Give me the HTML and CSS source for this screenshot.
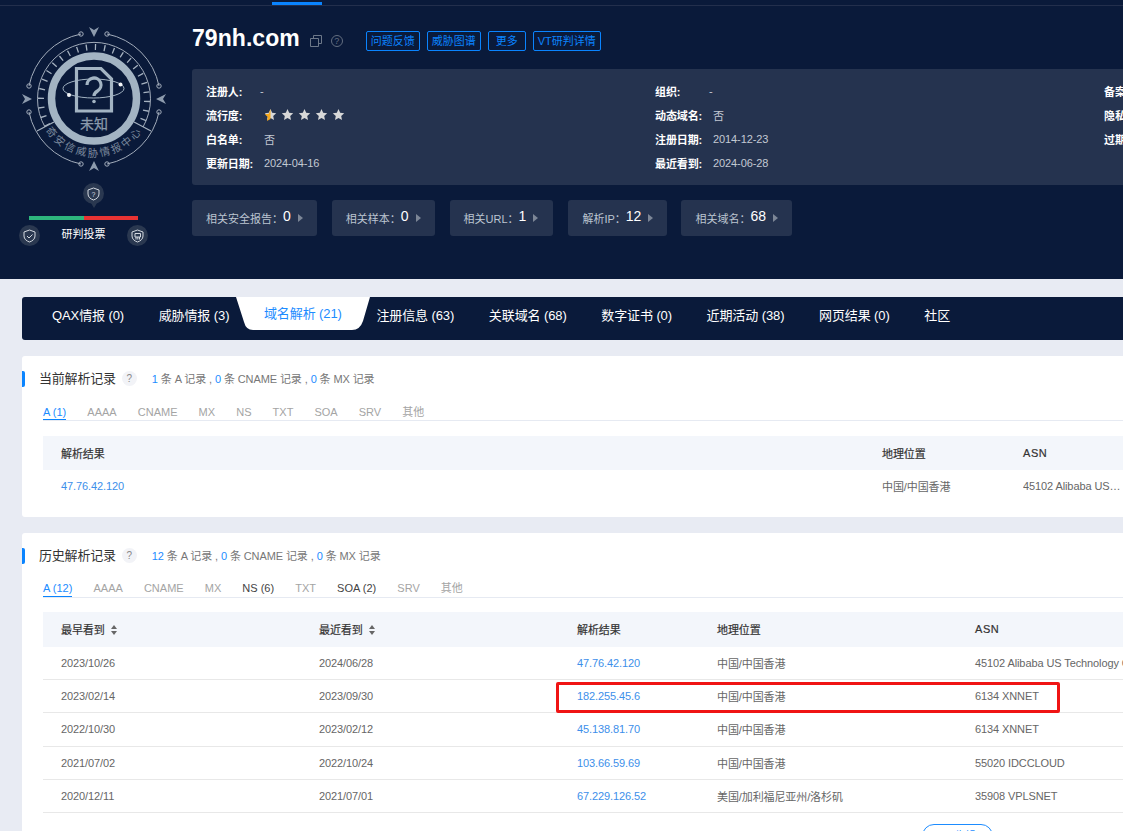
FILE: index.html
```html
<!DOCTYPE html>
<html lang="zh">
<head>
<meta charset="utf-8">
<title>79nh.com</title>
<link rel="stylesheet" href="styles.css">
</head>
<body>
<div class="page">
  <header class="hero">
    <div class="topnav"><span class="topnav-active"></span></div>
    <div class="hero-body">
      <aside class="verdict">
        <svg class="seal" width="192" height="180" viewBox="0 0 192 180">
          <g fill="none" stroke="#a2acba" stroke-width="1">
            <path d="M29 86A66 66 0 0 1 81 34"/><path d="M107 34A66 66 0 0 1 159 86"/>
            <path d="M29 112A66 66 0 0 0 81 164"/><path d="M107 164A66 66 0 0 0 159 112"/>
            <circle cx="29" cy="86" r="2.2"/><circle cx="159" cy="86" r="2.2"/>
            <circle cx="29" cy="112" r="2.2"/><circle cx="159" cy="112" r="2.2"/>
            <circle cx="81" cy="34" r="2.2"/><circle cx="107" cy="34" r="2.2"/>
            <circle cx="81" cy="164" r="2.2"/><circle cx="107" cy="164" r="2.2"/>
            <path d="M45 127A56.500 56.500 0 1 1 143 127"/>
            <path d="M47.500 125.500A53 53 0 1 1 140.500 125.500" stroke-width="6" stroke-dasharray="1.3 7.900" stroke="#a6b2c0"/>
            <path d="M37 131L54 122M151 131L134 122" stroke="#a6b2c0" stroke-width="1.200"/>
            <circle cx="94" cy="98.500" r="42.500" stroke="#a3b4c3" stroke-width="7.500"/>
          </g>
          <g fill="#8d9bad">
            <path d="M89 27l5 3 5-3-5 10z"/><path d="M89 171l5-3 5 3-5-10z"/>
            <path d="M22 94l3 5-3 5 10-5z"/><path d="M166 94l-3 5 3 5-10-5z"/>
          </g>
          <path d="M76.500 68.500h24.500l10.500 10.500v32H76.500z" fill="none" stroke="#a3b4c3" stroke-width="3.200"/>
          <path d="M87 85a7 7 0 1 1 10.500 6c-2.500 1.500-3.500 2.500-3.500 5" fill="none" stroke="#a3b4c3" stroke-width="3.200"/>
          <circle cx="94" cy="101.500" r="1.800" fill="#a3b4c3"/>
          <ellipse cx="93.500" cy="88.500" rx="30.500" ry="9.500" fill="none" stroke="#a3b4c3" stroke-width="1"/>
          <circle cx="69" cy="95" r="2" fill="#f4f6f8"/><circle cx="120.500" cy="84.500" r="2" fill="#f4f6f8"/>
          <text class="seal-state" x="94" y="129" text-anchor="middle">未知</text>
          <path id="sealArc" d="M44 128A58 58 0 0 0 144 128" fill="none"/>
          <text class="seal-org"><textPath href="#sealArc" startOffset="50%" text-anchor="middle">奇安信威胁情报中心</textPath></text>
        </svg>
        <div class="pin">
          <span class="round-icon"><svg width="13" height="14" viewBox="0 0 13 14"><path d="M6.500 1L12 3v4c0 3-2.500 5-5.500 6C3.500 12 1 10 1 7V3z" fill="none" stroke="#d4d9e0"/><text class="pin-q" x="6.500" y="9.500" text-anchor="middle">?</text></svg></span>
        </div>
        <div class="vote-bar"><span class="vote-good"></span><span class="vote-bad"></span></div>
        <div class="vote-row">
          <span class="round-icon"><svg width="13" height="14" viewBox="0 0 13 14"><path d="M6.500 1L12 3v4c0 3-2.500 5-5.500 6C3.500 12 1 10 1 7V3z" fill="none" stroke="#d4d9e0"/><path d="M4 7l2 2 3.500-3.500" fill="none" stroke="#d4d9e0"/></svg></span>
          <span class="vote-label">研判投票</span>
          <span class="round-icon"><svg width="13" height="14" viewBox="0 0 13 14"><path d="M6.500 1L12 3v4c0 3-2.500 5-5.500 6C3.500 12 1 10 1 7V3z" fill="none" stroke="#d4d9e0"/><path d="M4 4.500h5.500v3.500h-5.500zM5 8v2.500M6.800 8v2.500M8.500 8v2.500" fill="none" stroke="#d4d9e0"/></svg></span>
        </div>
      </aside>
      <div class="summary">
        <div class="title-row">
          <h1 class="domain">79nh.com</h1>
          <svg class="copy" width="12" height="12" viewBox="0 0 12 12"><path d="M.5 3.500h8v8h-8zM3.500 3.500v-3h8v8h-3" fill="none" stroke="#6d7889"/></svg>
          <span class="help-dark">?</span>
          <div class="actions">
            <a class="action">问题反馈</a><a class="action">威胁图谱</a><a class="action action-more">更多</a><a class="action">VT研判详情</a>
          </div>
        </div>
        <div class="info">
          <div class="info-col">
            <div class="info-row"><b>注册人:</b><span class="dash">-</span></div>
            <div class="info-row"><b>流行度:</b><span class="stars"><svg width="84" height="14" viewBox="0 0 84 14"><defs><path id="st" d="M6.500 1l1.700 3.700 4 .5-3 2.800.8 4-3.500-2-3.500 2 .8-4-3-2.800 4-.5z"/></defs><use href="#st" fill="#d8d8d8"/><path d="M6.500 1v10l-3.500 2 .8-4-3-2.800 4-.5z" fill="#f5a81c"/><use href="#st" x="17" fill="#d8d8d8"/><use href="#st" x="34" fill="#d8d8d8"/><use href="#st" x="51" fill="#d8d8d8"/><use href="#st" x="68" fill="#d8d8d8"/></svg></span></div>
            <div class="info-row"><b>白名单:</b><span>否</span></div>
            <div class="info-row"><b>更新日期:</b><span>2024-04-16</span></div>
          </div>
          <div class="info-col">
            <div class="info-row"><b>组织:</b><span class="dash">-</span></div>
            <div class="info-row"><b>动态域名:</b><span>否</span></div>
            <div class="info-row"><b>注册日期:</b><span>2014-12-23</span></div>
            <div class="info-row"><b>最近看到:</b><span>2024-06-28</span></div>
          </div>
          <div class="info-col">
            <div class="info-row"><b>备案信息:</b><span>-</span></div>
            <div class="info-row"><b>隐私保护:</b><span>-</span></div>
            <div class="info-row"><b>过期日期:</b><span>-</span></div>
          </div>
        </div>
        <div class="stats">
          <a class="stat">相关安全报告：<b>0</b><i class="tri"></i></a>
          <a class="stat">相关样本：<b>0</b><i class="tri"></i></a>
          <a class="stat stat-url">相关URL：<b>1</b><i class="tri"></i></a>
          <a class="stat stat-ip">解析IP：<b>12</b><i class="tri"></i></a>
          <a class="stat">相关域名：<b>68</b><i class="tri"></i></a>
        </div>
      </div>
    </div>
  </header>

  <main class="content">
    <nav class="tabs">
      <a class="tab">QAX情报 (0)</a>
      <a class="tab">威胁情报 (3)</a>
      <a class="tab tab-active"><svg class="tab-shape" width="134" height="33" viewBox="0 0 134 33"><path d="M0 0H134L127 24Q124 33 116 33H17Q10 33 8 25Z" fill="#fff"/></svg><span>域名解析 (21)</span></a>
      <a class="tab">注册信息 (63)</a>
      <a class="tab">关联域名 (68)</a>
      <a class="tab">数字证书 (0)</a>
      <a class="tab">近期活动 (38)</a>
      <a class="tab">网页结果 (0)</a>
      <a class="tab">社区</a>
    </nav>

    <section class="card">
      <div class="card-head">
        <h2 class="card-title">当前解析记录</h2><span class="help">?</span>
        <p class="counts"><em>1</em> 条 A 记录 , <em>0</em> 条 CNAME 记录 , <em>0</em> 条 MX 记录</p>
      </div>
      <div class="rtabs">
        <a class="rtab rtab-active">A (1)</a><a class="rtab">AAAA</a><a class="rtab">CNAME</a><a class="rtab">MX</a><a class="rtab">NS</a><a class="rtab">TXT</a><a class="rtab">SOA</a><a class="rtab">SRV</a><a class="rtab">其他</a>
      </div>
      <div class="table table-now">
        <div class="tr th"><span>解析结果</span><span>地理位置</span><span class="asn">ASN</span></div>
        <div class="tr"><a>47.76.42.120</a><span>中国/中国香港</span><span class="clip">45102 Alibaba US Technology Co., Ltd.</span></div>
      </div>
    </section>

    <section class="card card-history">
      <div class="card-head">
        <h2 class="card-title">历史解析记录</h2><span class="help">?</span>
        <p class="counts"><em>12</em> 条 A 记录 , <em>0</em> 条 CNAME 记录 , <em>0</em> 条 MX 记录</p>
      </div>
      <div class="rtabs">
        <a class="rtab rtab-active">A (12)</a><a class="rtab">AAAA</a><a class="rtab">CNAME</a><a class="rtab">MX</a><a class="rtab rtab-has">NS (6)</a><a class="rtab">TXT</a><a class="rtab rtab-has">SOA (2)</a><a class="rtab">SRV</a><a class="rtab">其他</a>
      </div>
      <div class="table table-history">
        <div class="tr th"><span>最早看到<i class="sort"></i></span><span>最近看到<i class="sort"></i></span><span>解析结果</span><span>地理位置</span><span class="asn">ASN</span></div>
        <div class="tr line"><span>2023/10/26</span><span>2024/06/28</span><a>47.76.42.120</a><span>中国/中国香港</span><span>45102 Alibaba US Technology Co., Ltd.</span></div>
        <div class="tr line"><span>2023/02/14</span><span>2023/09/30</span><a>182.255.45.6</a><span>中国/中国香港</span><span>6134 XNNET</span><i class="mark"></i></div>
        <div class="tr line"><span>2022/10/30</span><span>2023/02/12</span><a>45.138.81.70</a><span>中国/中国香港</span><span>6134 XNNET</span></div>
        <div class="tr line"><span>2021/07/02</span><span>2022/10/24</span><a>103.66.59.69</a><span>中国/中国香港</span><span>55020 IDCCLOUD</span></div>
        <div class="tr line"><span>2020/12/11</span><span>2021/07/01</span><a>67.229.126.52</a><span>美国/加利福尼亚州/洛杉矶</span><span>35908 VPLSNET</span></div>
      </div>
      <div class="more-row"><a class="more">∧ 收起</a></div>
    </section>
  </main>
</div>
</body>
</html>
```

FILE: styles.css
```css
* { box-sizing: border-box; }
html, body { margin: 0; padding: 0; height: 831px; overflow: hidden; }
body { background: #e8ebf3; font-family: "Liberation Sans", "Noto Sans CJK SC", sans-serif; font-size: 11px; letter-spacing: -0.1px; color: #555; }
a { text-decoration: none; color: inherit; }
h1, h2, p { margin: 0; font-weight: normal; }
em { font-style: normal; }
.page { width: 1500px; }

.hero { height: 279px; background: #0a1a3a; }
.topnav { height: 6px; border-bottom: 1px solid #232f4c; padding-left: 272px; }
.topnav-active { display: block; width: 50px; height: 5px; padding-top: 2px; background: #0a84ff; background-clip: content-box; }
.hero-body { display: flex; }

.verdict { width: 192px; flex: none; display: flex; flex-direction: column; align-items: flex-start; }
.seal { display: block; margin-top: -6px; }
.seal-state { font-size: 14px; fill: #8a9aac; stroke: #8a9aac; stroke-width: .25px; letter-spacing: 0; }
.seal-org { font-size: 10.500px; fill: #7a899d; letter-spacing: 2.200px; }
.pin { align-self: flex-start; margin: 3px 0 0 83px; position: relative; }
.pin::after { content: ""; position: absolute; left: 7.500px; top: 20px; border: 3px solid transparent; border-top: 5px solid #2a3850; border-bottom: 0; }
.round-icon { display: flex; align-items: center; justify-content: center; width: 21px; height: 21px; border-radius: 50%; background: #2a3850; }
.pin-q { font-size: 7px; fill: #d4d9e0; }
.vote-bar { display: flex; width: 109px; height: 4px; margin: 12px 0 0 29px; }
.vote-good { width: 55px; background: #2eb67d; }
.vote-bad { flex: 1; background: #e83333; }
.vote-row { display: flex; align-items: center; width: 129px; margin: 5px 0 0 19px; justify-content: space-between; }
.vote-label { color: #fff; margin-top: -5px; letter-spacing: 0; }

.summary { flex: 1; }
.title-row { display: flex; align-items: center; height: 63px; padding-top: 7px; }
.domain { font-size: 23px; font-weight: bold; color: #fff; line-height: 28px; letter-spacing: .05px; margin-top: -6px; }
.copy { margin-left: 10px; }
.help-dark { display: flex; align-items: center; justify-content: center; width: 12px; height: 12px; margin-left: 9px; border: 1px solid #636e80; border-radius: 50%; color: #636e80; font-size: 9px; }
.actions { display: flex; gap: 7px; margin-left: 23px; }
.action { display: block; height: 20px; line-height: 18px; padding: 0 4px; border: 1px solid #0a84ff; border-radius: 2px; color: #0a84ff; white-space: nowrap; letter-spacing: 0; }
.action-more { padding: 0 7px; }

.info { display: grid; grid-template-columns: repeat(3, 449px); height: 116px; padding: 10px 14px; background: #25334f; border-radius: 3px; }
.info-row { display: flex; align-items: center; height: 24px; color: #c3c9d3; }
.info-row b { width: 58px; flex: none; color: #fff; }
.dash { margin-left: -4px; }
.stars { display: flex; }

.stats { display: flex; gap: 15px; margin-top: 15px; }
.stat { display: flex; align-items: center; height: 36px; padding: 0 14px; background: #25334f; border-radius: 3px; color: #bcc5d1; white-space: nowrap; letter-spacing: 0; }
.stat b { font-size: 14px; font-weight: normal; color: #fff; margin: -4px 0 0 0; }
.tri { display: block; margin-left: 7px; border: 4px solid transparent; border-left: 5px solid #7c8696; border-right: 0; }
.stat-url { padding-right: 15px; }
.stat-ip { margin-right: -1px; }

.content { padding: 18px 0 0 22px; }
.tabs { display: flex; height: 43px; padding-left: 30px; background: #0a1a3a; border-radius: 3px; }
.tab { display: block; position: relative; height: 43px; line-height: 37px; margin-right: 34.600px; font-size: 13px; color: #fff; white-space: nowrap; }
.tab span { position: relative; color: #1d8cff; line-height: 33px; display: block; }
.tab-shape { position: absolute; left: -28px; top: 0; }

.card { height: 161px; margin-top: 16px; background: #fff; border-radius: 3px; position: relative; padding: 0 0 0 21px; }
.card-history { height: 320px; }
.card-head { display: flex; align-items: center; height: 44px; }
.card-head::before { content: ""; position: absolute; left: 0; top: 15px; width: 3px; height: 16px; background: #0a84ff; border-radius: 0 2px 2px 0; }
.card-title { margin: -2px 0 0 -4px; font-size: 13px; letter-spacing: -0.2px; color: #333; white-space: nowrap; }
.help { display: flex; align-items: center; justify-content: center; width: 15px; height: 15px; margin-left: 6px; background: #f2f3f7; border-radius: 50%; font-size: 10px; color: #888; }
.counts { margin-left: 15px; color: #777; white-space: nowrap; }
.counts em { color: #1d8cff; }

.rtabs { display: flex; gap: 21.100px; height: 21px; border-bottom: 1px solid #e6eaf2; letter-spacing: 0; }
.rtab { display: block; height: 20px; line-height: 24px; color: #a4a4a4; white-space: nowrap; }
.rtab-active { color: #1d8cff; border-bottom: 1px solid #0a84ff; }
.rtab-has { color: #444; }
.card-history .rtab { line-height: 22px; }

.table { margin-top: 15px; }
.tr { display: grid; align-items: center; padding-left: 18px; height: 33.200px; color: #666; white-space: nowrap; position: relative; }
.tr a { color: #3d8fea; }
.th { background: #f3f6fb; color: #333; -webkit-text-stroke: .2px #333; }
.asn { letter-spacing: .6px; }
.table-now .tr { grid-template-columns: 821px 141px 100px; height: 34px; }
.table-now .tr:last-child { height: 32px; }
.clip { overflow: hidden; text-overflow: ellipsis; }
.table-history { margin-top: 14px; }
.table-history .tr { grid-template-columns: 258px 258px 140px 258px 1fr; }
.table-history .th { height: 35px; padding-bottom: 2px; }
.line { border-bottom: 1px solid #e8e8e8; }
.sort { display: inline-block; width: 7px; height: 10px; margin-left: 6px; vertical-align: -1px; position: relative; }
.sort::before, .sort::after { content: ""; position: absolute; left: 0; border: 3.500px solid transparent; }
.sort::before { top: 0; border-bottom: 4px solid #666; border-top: 0; }
.sort::after { bottom: 0; border-top: 4px solid #666; border-bottom: 0; }
.mark { position: absolute; left: 513px; top: 2px; width: 504px; height: 31px; border: 3px solid #f01414; border-radius: 2px; }
.more-row { padding: 11px 0 0 879px; }
.more { display: block; width: 71px; height: 24px; line-height: 22px; text-align: center; border: 1px solid #1d8cff; border-radius: 12px; color: #1d8cff; }
```
